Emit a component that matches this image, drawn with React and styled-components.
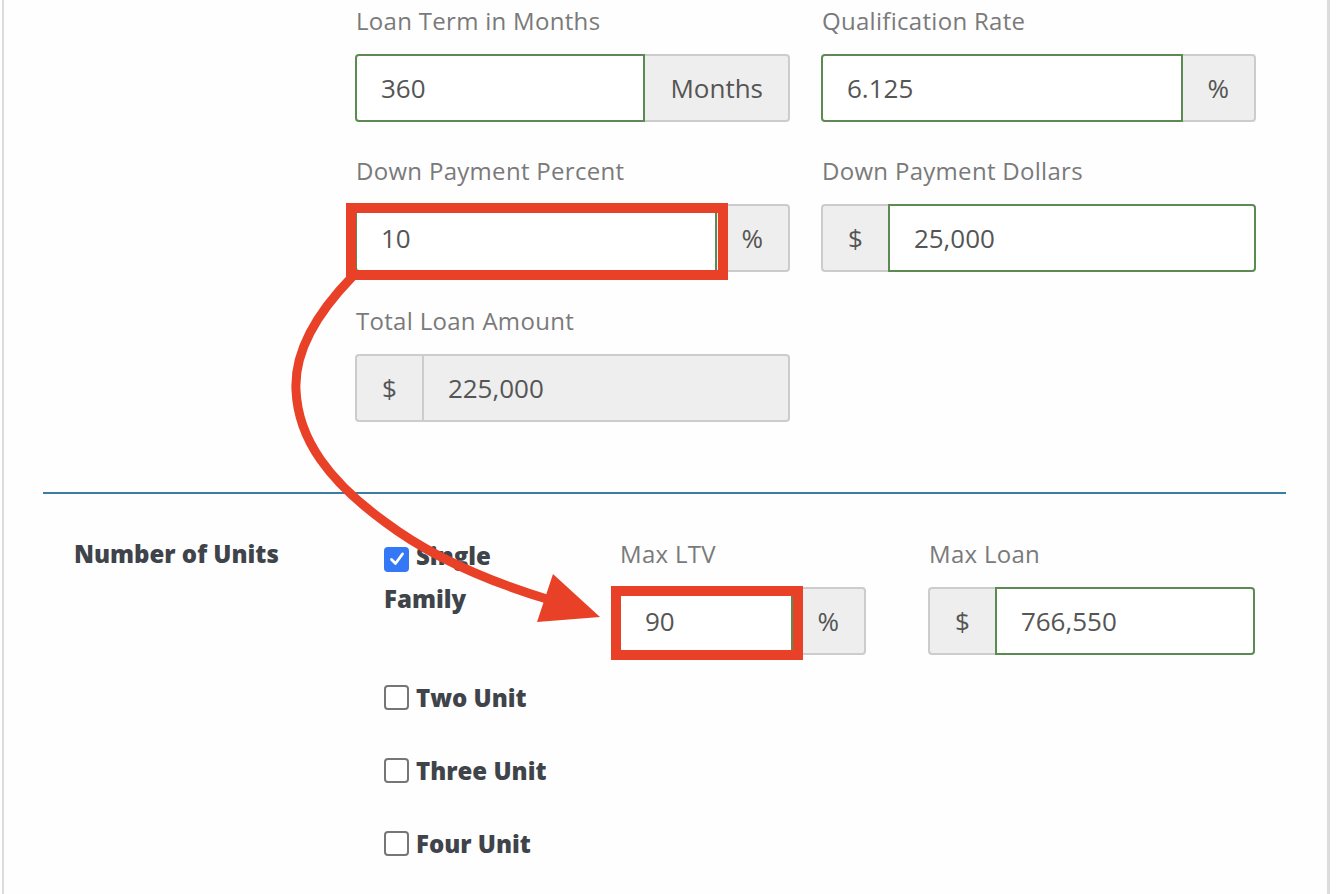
import React from "react";
import styled, { createGlobalStyle, css } from "styled-components";

const FONT = `"Open Sans", Lato, Arial, sans-serif`;

const Global = createGlobalStyle`
  html, body { margin: 0; padding: 0; background: #ffffff; }
  body { font-family: ${FONT}; }
  * { box-sizing: border-box; }
`;

const Page = styled.div`
  position: relative;
  width: 1340px;
  height: 894px;
  overflow: hidden;
  background: #fff;
`;

const Frame = styled.div`
  margin: 0 10px 0 2px;
  height: 100%;
  border-left: 2px solid #dcdcdc;
  border-right: 3px solid #dcdcdc;
  background: #fefefe;
  padding-top: 5px;
`;

const TopGrid = styled.div`
  margin-left: 351px;
  display: grid;
  grid-template-columns: 435px 435px;
  column-gap: 31px;
  row-gap: 33px;
`;

const Field = styled.div`
  display: flex;
  flex-direction: column;
`;

const Label = styled.div`
  font-family: ${FONT};
  font-size: 24px;
  letter-spacing: 0.3px;
  line-height: 31px;
  color: #7a7a7a;
  margin-bottom: 18px;
  padding-left: 1px;
  white-space: nowrap;
`;

const Group = styled.div`
  display: flex;
  height: 68px;
  width: 100%;
`;

const Addon = styled.div`
  flex: 0 0 auto;
  display: flex;
  align-items: center;
  justify-content: center;
  padding: 0 25px;
  background: #eeeeee;
  border: 2px solid #cccccc;
  color: #555;
  font-family: ${FONT};
  font-size: 26px;
  ${(p) =>
    p.$side === "left"
      ? css`
          border-radius: 4px 0 0 4px;
          border-right: none;
        `
      : css`
          border-radius: 0 4px 4px 0;
          border-left: none;
        `}
`;

const Input = styled.div`
  flex: 1 1 auto;
  display: flex;
  align-items: center;
  padding-left: 24px;
  font-family: ${FONT};
  font-size: 26px;
  color: #555;
  background: ${(p) => (p.$disabled ? "#eeeeee" : "#ffffff")};
  border: 2px solid ${(p) => (p.$disabled ? "#cccccc" : "#5b8b51")};
  border-radius: ${(p) =>
    p.$addon === "left" ? "0 4px 4px 0" : p.$addon === "right" ? "4px 0 0 4px" : "4px"};
`;

const Divider = styled.div`
  margin: 70px 41px 0 39px;
  height: 2px;
  background: #3a7ca4;
`;

const BottomRow = styled.div`
  display: flex;
  padding-left: 70px;
  padding-top: 44px;
`;

const SectionTitle = styled.div`
  width: 310px;
  flex: 0 0 310px;
  font-family: ${FONT};
  font-weight: 800;
  font-size: 24px;
  line-height: 31px;
  color: #3f434a;
`;

const Options = styled.div`
  flex: 0 0 235px;
  margin-top: -4px;
  display: grid;
  grid-template-rows: 142px 73px 73px 73px;
`;

const Option = styled.label`
  display: block;
  max-width: 178px;
  font-family: ${FONT};
  font-weight: 800;
  font-size: 24px;
  line-height: 43px;
  color: #3f434a;
`;

const Box = styled.span`
  display: inline-flex;
  align-items: center;
  justify-content: center;
  width: 25px;
  height: 25px;
  margin-right: 7px;
  vertical-align: -3px;
  border-radius: 4px;
  ${(p) =>
    p.$checked
      ? css`
          background: #3478f6;
        `
      : css`
          background: #fff;
          border: 2px solid #767676;
        `}
`;

const SmallField = styled.div`
  flex: 0 0 ${(p) => p.$w}px;
  margin-left: ${(p) => p.$ml || 0}px;
  display: flex;
  flex-direction: column;
`;

const Overlay = styled.svg`
  position: absolute;
  left: 0;
  top: 0;
  pointer-events: none;
`;

function Check({ checked }) {
  return (
    <Box $checked={checked}>
      {checked && (
        <svg width="18" height="18" viewBox="0 0 18 18">
          <path d="M3.5 9.5 L7.5 13.5 L14.5 4" fill="none" stroke="#fff" strokeWidth="2.8" strokeLinecap="round" strokeLinejoin="round" />
        </svg>
      )}
    </Box>
  );
}

function InputGroup({ value, addon, side = "right", disabled }) {
  return (
    <Group>
      {side === "left" && <Addon $side="left">{addon}</Addon>}
      <Input $addon={side} $disabled={disabled}>{value}</Input>
      {side === "right" && <Addon $side="right">{addon}</Addon>}
    </Group>
  );
}

export default function App() {
  return (
    <Page>
      <Global />
      <Frame>
        <TopGrid>
          <Field>
            <Label>Loan Term in Months</Label>
            <InputGroup value="360" addon="Months" />
          </Field>
          <Field>
            <Label>Qualification Rate</Label>
            <InputGroup value="6.125" addon="%" />
          </Field>
          <Field>
            <Label>Down Payment Percent</Label>
            <InputGroup value="10" addon="%" />
          </Field>
          <Field>
            <Label>Down Payment Dollars</Label>
            <InputGroup value="25,000" addon="$" side="left" />
          </Field>
          <Field>
            <Label>Total Loan Amount</Label>
            <InputGroup value="225,000" addon="$" side="left" disabled />
          </Field>
        </TopGrid>
        <Divider />
        <BottomRow>
          <SectionTitle>Number of Units</SectionTitle>
          <Options>
            <Option><Check checked />Single Family</Option>
            <Option><Check />Two Unit</Option>
            <Option><Check />Three Unit</Option>
            <Option><Check />Four Unit</Option>
          </Options>
          <SmallField $w={247}>
            <Label>Max LTV</Label>
            <InputGroup value="90" addon="%" />
          </SmallField>
          <SmallField $w={327} $ml={62}>
            <Label>Max Loan</Label>
            <InputGroup value="766,550" addon="$" side="left" />
          </SmallField>
        </BottomRow>
      </Frame>
      <Overlay width="1340" height="894" viewBox="0 0 1340 894">
        <rect x="351" y="208" width="372" height="67" fill="none" stroke="#e84128" strokeWidth="10" />
        <rect x="616" y="591" width="182" height="64" fill="none" stroke="#e84128" strokeWidth="10" />
        <path
          d="M352 277 C318 312 294 350 296 390 C298 440 330 482 385 522 C430 556 490 582 550 600"
          fill="none"
          stroke="#e84128"
          strokeWidth="9"
        />
        <polygon points="553,574 537,622 600,617" fill="#e84128" />
      </Overlay>
    </Page>
  );
}
